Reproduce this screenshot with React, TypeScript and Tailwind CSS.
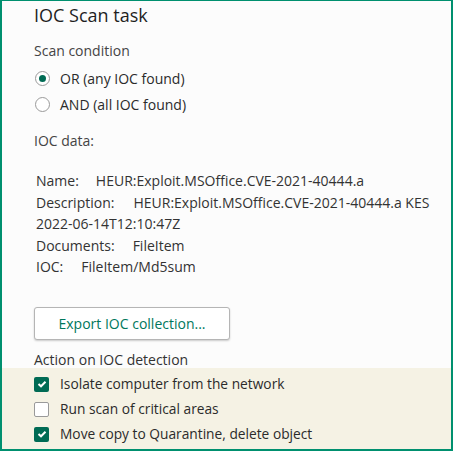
import React from "react";

const font = { fontFamily: '"Open Sans", "Noto Sans", sans-serif' };

function Radio({ checked, label }: { checked: boolean; label: string }) {
  return (
    <div className="flex items-center h-[26px]">
      <span className="w-[15px] h-[15px] rounded-full border border-[#9a9a9a] bg-white flex items-center justify-center ml-[1px]">
        {checked && <span className="w-[7px] h-[7px] rounded-full bg-[#006b54]" />}
      </span>
      <span className="ml-[10px] text-[14px] text-[#2b2b2b]">{label}</span>
    </div>
  );
}

function Check({ checked, label }: { checked: boolean; label: string }) {
  return (
    <div className="flex items-center h-[25px]">
      <span
        className={
          checked
            ? "w-[15px] h-[15px] rounded-[2px] bg-[#006b54] flex items-center justify-center"
            : "w-[15px] h-[15px] rounded-[2px] border border-[#9a9a9a] bg-white"
        }
      >
        {checked && (
          <svg width="10" height="8" viewBox="0 0 10 8">
            <path d="M1.5 4 L4 6.3 L8.5 1.7" stroke="white" strokeWidth="2" fill="none" />
          </svg>
        )}
      </span>
      <span className="ml-[11px] text-[13.75px] text-[#2b2b2b]">{label}</span>
    </div>
  );
}

export default function App() {
  return (
    <div
      style={font}
      className="w-[453px] h-[451px] bg-[#fcfcfc] border-[#00906f] border-t border-l-2 border-r-2 border-b-2 flex flex-col overflow-hidden"
    >
      <div className="pl-[32px] pt-[1px]">
        <div className="text-[18px] text-[#1f1f1f] leading-[26px]">IOC Scan task</div>
        <div className="mt-[13px] text-[14px] text-[#444] leading-[20px]">Scan condition</div>
        <div className="mt-[4px]">
          <Radio checked label="OR (any IOC found)" />
          <Radio checked={false} label="AND (all IOC found)" />
        </div>
        <div className="mt-[14px] text-[14px] text-[#444] leading-[20px]">IOC data:</div>
        <div className="mt-[19px] pl-[2px] text-[14px] text-[#333] leading-[21.5px]">
          <div>
            Name:<span className="ml-[17px]">HEUR:Exploit.MSOffice.CVE-2021-40444.a</span>
          </div>
          <div>
            Description:<span className="ml-[19px]">HEUR:Exploit.MSOffice.CVE-2021-40444.a KES</span>
          </div>
          <div>2022-06-14T12:10:47Z</div>
          <div>
            Documents:<span className="ml-[18px]">FileItem</span>
          </div>
          <div>
            IOC:<span className="ml-[18px]">FileItem/Md5sum</span>
          </div>
        </div>
        <button className="mt-[29px] w-[196px] h-[33px] rounded-[3px] border border-[#b5b5b5] bg-white shadow-[0_1px_2px_rgba(0,0,0,0.2)] text-[14px] text-[#00775c]">
          Export IOC collection...
        </button>
        <div className="mt-[11px] text-[14px] text-[#333] leading-[17px]">Action on IOC detection</div>
      </div>
      <div className="flex-1 bg-[#f5f2e4] pl-[32px] pt-[4px]">
        <Check checked label="Isolate computer from the network" />
        <Check checked={false} label="Run scan of critical areas" />
        <Check checked label="Move copy to Quarantine, delete object" />
      </div>
    </div>
  );
}
